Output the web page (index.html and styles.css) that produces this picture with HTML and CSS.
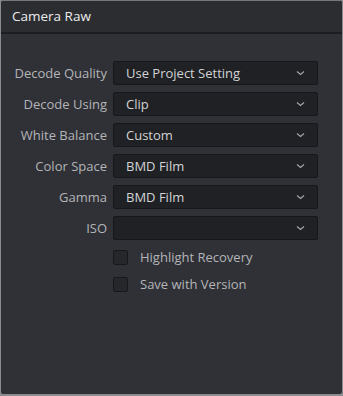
FILE: index.html
```html
<!DOCTYPE html>
<html>
    <head>
        <meta charset="UTF-8">
        <meta name="viewport" content="width=device-width, initial-scale=1.0">
        <link rel="stylesheet" href="styles.css">
    </head>

    <body>
        <div class="panel">
            <div class="header">Camera Raw</div>

            <div class="fields">
                <div class="label">Decode Quality</div>
                <div class="select"><span>Use Project Setting</span><svg class="chev" width="9" height="6" viewBox="0 0 9 6"><path d="M1 1.5 L4.5 4.5 L8 1.5"/></svg></div>

                <div class="label">Decode Using</div>
                <div class="select"><span>Clip</span><svg class="chev" width="9" height="6" viewBox="0 0 9 6"><path d="M1 1.5 L4.5 4.5 L8 1.5"/></svg></div>

                <div class="label">White Balance</div>
                <div class="select"><span>Custom</span><svg class="chev" width="9" height="6" viewBox="0 0 9 6"><path d="M1 1.5 L4.5 4.5 L8 1.5"/></svg></div>

                <div class="label">Color Space</div>
                <div class="select"><span>BMD Film</span><svg class="chev" width="9" height="6" viewBox="0 0 9 6"><path d="M1 1.5 L4.5 4.5 L8 1.5"/></svg></div>

                <div class="label">Gamma</div>
                <div class="select"><span>BMD Film</span><svg class="chev" width="9" height="6" viewBox="0 0 9 6"><path d="M1 1.5 L4.5 4.5 L8 1.5"/></svg></div>

                <div class="label">ISO</div>
                <div class="select"><span></span><svg class="chev" width="9" height="6" viewBox="0 0 9 6"><path d="M1 1.5 L4.5 4.5 L8 1.5"/></svg></div>
            </div>

            <div class="checks">
                <div class="check"><div class="box"></div>Highlight Recovery</div>
                <div class="check"><div class="box"></div>Save with Version</div>
            </div>
        </div>
    </body>
</html>
```

FILE: styles.css
```css
html, body {
    margin: 0;
    background: #8c8d90;
}
body {
    font-family: "Open Sans", "Noto Sans", sans-serif;
    font-size: 13px;
}
.panel {
    width: 343px;
    height: 395px;
    box-sizing: border-box;
    border: 1px solid #8a8b8e;
    border-top-color: #77787b;
    border-radius: 3px;
    background: #2f3136;
    overflow: hidden;
}
.header {
    height: 31px;
    line-height: 30px;
    padding-left: 11px;
    background: #2b2d31;
    border-bottom: 2px solid #1c1d20;
    color: #ececec;
    font-size: 13.5px;
}
.fields {
    display: grid;
    grid-template-columns: 106px 205px;
    column-gap: 6px;
    row-gap: 7px;
    padding-top: 27px;
}
.label {
    text-align: right;
    line-height: 24px;
    color: #b4b5b8;
}
.select {
    height: 24px;
    box-sizing: border-box;
    border: 1px solid #16171a;
    border-radius: 2px;
    background: #202124;
    display: flex;
    align-items: center;
    justify-content: space-between;
    padding: 0 12px 0 12px;
    color: #d2d3d5;
}
.chev path {
    fill: none;
    stroke: #a4a5a8;
    stroke-width: 1.2;
}
.checks {
    display: flex;
    flex-direction: column;
    gap: 11px;
    padding-top: 9px;
    padding-left: 112px;
}
.check {
    display: flex;
    align-items: center;
    gap: 12px;
    height: 16px;
    color: #b4b5b8;
}
.box {
    width: 15px;
    height: 15px;
    box-sizing: border-box;
    border: 1px solid #17181b;
    border-radius: 2px;
    background: #26272a;
}
```
